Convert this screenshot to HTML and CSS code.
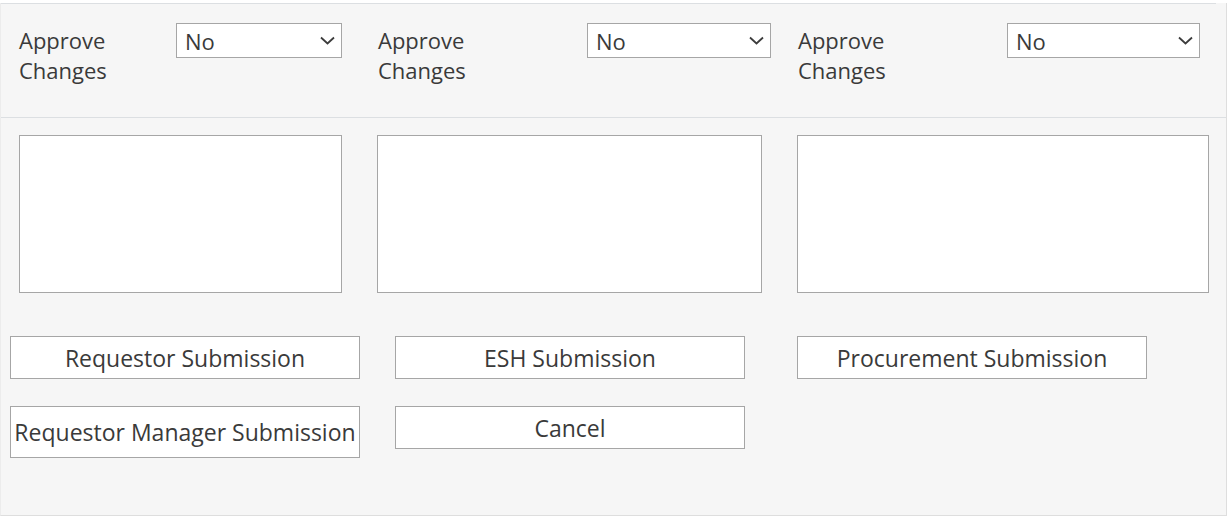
FILE: index.html
```html
<!DOCTYPE html>
<html>
<head>
    <title>Approvals</title>
    <link rel="stylesheet" href="styles.css">
</head>
<body>
    <div class="panel">
        <div class="approvals">
            <div class="approval">
                <label for="approve1">Approve Changes</label>
                <div class="select-wrap">
                    <select id="approve1"><option>No</option><option>Yes</option></select>
                    <svg class="chevron" width="15" height="9" viewBox="0 0 15 9"><path d="M1 1.5l6.5 6 6.5-6" fill="none" stroke="#3c3c3c" stroke-width="1.8"/></svg>
                </div>
            </div>
            <div class="approval">
                <label for="approve2">Approve Changes</label>
                <div class="select-wrap">
                    <select id="approve2"><option>No</option><option>Yes</option></select>
                    <svg class="chevron" width="15" height="9" viewBox="0 0 15 9"><path d="M1 1.5l6.5 6 6.5-6" fill="none" stroke="#3c3c3c" stroke-width="1.8"/></svg>
                </div>
            </div>
            <div class="approval">
                <label for="approve3">Approve Changes</label>
                <div class="select-wrap">
                    <select id="approve3"><option>No</option><option>Yes</option></select>
                    <svg class="chevron" width="15" height="9" viewBox="0 0 15 9"><path d="M1 1.5l6.5 6 6.5-6" fill="none" stroke="#3c3c3c" stroke-width="1.8"/></svg>
                </div>
            </div>
        </div>
        <div class="notes">
            <textarea></textarea>
            <textarea></textarea>
            <textarea></textarea>
        </div>
        <div class="actions">
            <button type="button">Requestor Submission</button>
            <button type="button">ESH Submission</button>
            <button type="button">Procurement Submission</button>
            <button type="button" class="tall">Requestor Manager Submission</button>
            <button type="button">Cancel</button>
        </div>
    </div>
</body>
</html>
```

FILE: styles.css
```css
body { margin: 0; font-family: "Open Sans", "Noto Sans", sans-serif; color: #3a3a3a; }
.panel { box-sizing: border-box; width: 1227px; height: 513px; background: #f6f6f6; border-left: 1px solid #ececec; border-right: 1px solid #dedede; border-bottom: 1px solid #dedede; }

.approvals { box-sizing: border-box; height: 114px; margin: 3px 10px 0 0; padding: 19px 0 0 18px; border-top: 1px solid #dcdfe2; display: grid; grid-template-columns: 358px 420px 403px; }
.approval { display: flex; align-items: flex-start; }
.approval label { box-sizing: border-box; flex: 0 0 210px; padding-right: 90px; font-size: 22px; line-height: 30px; margin-top: 2px; }
.approval + .approval label { padding-left: 1px; }
.approval:first-child label { flex-basis: 157px; padding-right: 30px; }
.select-wrap { position: relative; width: 184px; }
.approval:first-child .select-wrap { width: 166px; }
.approval:last-child .select-wrap { width: 193px; }
.select-wrap select { appearance: none; -webkit-appearance: none; box-sizing: border-box; width: 100%; height: 35px; padding: 0 30px 0 8px; background: #fff; border: 1px solid #a6a6a6; border-radius: 0; font: inherit; font-size: 22px; color: #3a3a3a; outline: none; }
.chevron { position: absolute; right: 7px; top: 13px; pointer-events: none; }

.notes { display: grid; grid-template-columns: 358px 420px 412px; padding: 17px 0 0 18px; border-top: 1px solid #dcdfe2; }
.notes textarea { box-sizing: border-box; width: 100%; height: 158px; background: #fff; border: 1px solid #a6a6a6; border-radius: 0; resize: none; }
.notes textarea:nth-child(1) { width: 323px; }
.notes textarea:nth-child(2) { width: 385px; }

.actions { display: grid; grid-template-columns: 385px 402px 350px; row-gap: 27px; align-items: start; padding: 43px 0 0 9px; }
.actions button { box-sizing: border-box; width: 350px; height: 43px; padding: 0; background: #fff; border: 1px solid #a6a6a6; border-radius: 0; font: inherit; font-size: 23px; color: #3a3a3a; white-space: nowrap; cursor: pointer; }
.actions button.tall { height: 52px; }
.actions button:hover { background: #f0f0f0; }
```
